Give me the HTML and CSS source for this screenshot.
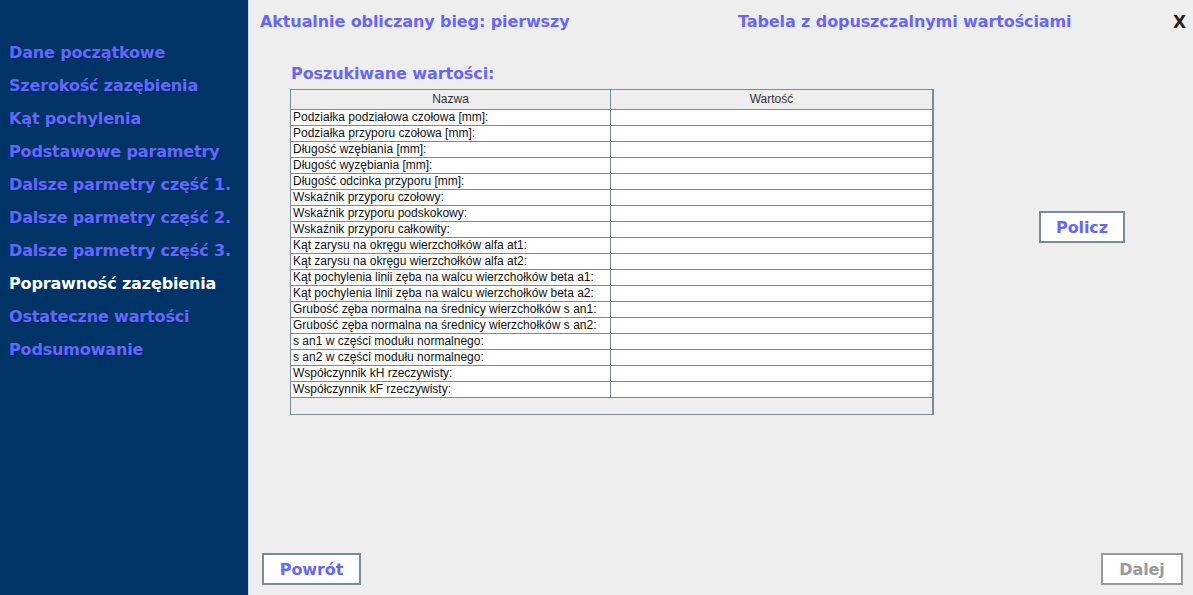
FILE: index.html
```html
<!DOCTYPE html>
<html lang="pl">
<head>
<meta charset="utf-8">
<title>Poprawność zazębienia</title>
<link rel="stylesheet" href="styles.css">
</head>
<body>
<div class="app">
  <nav class="sidebar">
    <div class="nav-item">Dane początkowe</div>
    <div class="nav-item">Szerokość zazębienia</div>
    <div class="nav-item">Kąt pochylenia</div>
    <div class="nav-item">Podstawowe parametry</div>
    <div class="nav-item">Dalsze parmetry część 1.</div>
    <div class="nav-item">Dalsze parmetry część 2.</div>
    <div class="nav-item">Dalsze parmetry część 3.</div>
    <div class="nav-item active">Poprawność zazębienia</div>
    <div class="nav-item">Ostateczne wartości</div>
    <div class="nav-item">Podsumowanie</div>
  </nav>
  <main class="main">
    <header class="header">
      <div class="title">Aktualnie obliczany bieg: pierwszy</div>
      <div class="title">Tabela z dopuszczalnymi wartościami</div>
      <div class="close">X</div>
    </header>
    <section class="content">
      <div class="table-block">
        <div class="section-title">Poszukiwane wartości:</div>
        <div class="grid">
          <div class="row head"><div class="cell">Nazwa</div><div class="cell">Wartość</div></div>
          <div class="row"><div class="cell">Podziałka podziałowa czołowa [mm]:</div><div class="cell"></div></div>
          <div class="row"><div class="cell">Podziałka przyporu czołowa [mm]:</div><div class="cell"></div></div>
          <div class="row"><div class="cell">Długość wzębiania [mm]:</div><div class="cell"></div></div>
          <div class="row"><div class="cell">Długość wyzębiania [mm]:</div><div class="cell"></div></div>
          <div class="row"><div class="cell">Długość odcinka przyporu [mm]:</div><div class="cell"></div></div>
          <div class="row"><div class="cell">Wskaźnik przyporu czołowy:</div><div class="cell"></div></div>
          <div class="row"><div class="cell">Wskaźnik przyporu podskokowy:</div><div class="cell"></div></div>
          <div class="row"><div class="cell">Wskaźnik przyporu całkowity:</div><div class="cell"></div></div>
          <div class="row"><div class="cell">Kąt zarysu na okręgu wierzchołków alfa at1:</div><div class="cell"></div></div>
          <div class="row"><div class="cell">Kąt zarysu na okręgu wierzchołków alfa at2:</div><div class="cell"></div></div>
          <div class="row"><div class="cell">Kąt pochylenia linii zęba na walcu wierzchołków beta a1:</div><div class="cell"></div></div>
          <div class="row"><div class="cell">Kąt pochylenia linii zęba na walcu wierzchołków beta a2:</div><div class="cell"></div></div>
          <div class="row"><div class="cell">Grubość zęba normalna na średnicy wierzchołków s an1:</div><div class="cell"></div></div>
          <div class="row"><div class="cell">Grubość zęba normalna na średnicy wierzchołków s an2:</div><div class="cell"></div></div>
          <div class="row"><div class="cell">s an1 w części modułu normalnego:</div><div class="cell"></div></div>
          <div class="row"><div class="cell">s an2 w części modułu normalnego:</div><div class="cell"></div></div>
          <div class="row"><div class="cell">Współczynnik kH rzeczywisty:</div><div class="cell"></div></div>
          <div class="row"><div class="cell">Współczynnik kF rzeczywisty:</div><div class="cell"></div></div>
          <div class="filler"></div>
        </div>
      </div>
      <div class="side-actions">
        <button class="btn">Policz</button>
      </div>
    </section>
    <footer class="footer">
      <button class="btn">Powrót</button>
      <button class="btn disabled">Dalej</button>
    </footer>
  </main>
</div>
</body>
</html>
```

FILE: styles.css
```css
* { box-sizing: border-box; }
html, body { margin: 0; padding: 0; }
body {
  width: 1193px;
  height: 595px;
  overflow: hidden;
  background: #eeeeee;
  font-family: "DejaVu Sans", Verdana, sans-serif;
}
.app {
  display: flex;
  height: 595px;
}
.sidebar {
  width: 248px;
  flex: none;
  background: #003366;
  padding-top: 41px;
  padding-left: 9px;
  display: flex;
  flex-direction: column;
}
.nav-item {
  height: 33px;
  line-height: 24px;
  color: #6666ff;
  font-weight: bold;
  font-size: 16px;
  letter-spacing: -0.15px;
  white-space: nowrap;
}
.nav-item.active { color: #ffffff; }
.main {
  flex: 1;
  display: flex;
  flex-direction: column;
  border-left: 1px solid #d4d9e6;
}
.header {
  height: 43px;
  display: grid;
  grid-template-columns: 478px 1fr auto;
  align-items: center;
  padding: 0 7px 0 11px;
  background: #eeeeee;
}
.title {
  color: #6666ff;
  font-weight: bold;
  font-size: 16px;
  letter-spacing: -0.1px;
  white-space: nowrap;
}
.close {
  color: #222222;
  font-weight: bold;
  font-size: 17px;
}
.content {
  flex: 1;
  display: flex;
  padding-left: 41px;
}
.table-block {
  width: 644px;
  display: flex;
  flex-direction: column;
}
.section-title {
  color: #6666ff;
  font-weight: bold;
  font-size: 16px;
  letter-spacing: -0.1px;
  height: 46px;
  line-height: 22px;
  padding-top: 20px;
  padding-left: 1px;
  white-space: nowrap;
}
.grid {
  border: 1px solid #7a8a99;
  border-right-width: 2px;
  background: #eeeeee;
  font-family: "Liberation Sans", Arial, sans-serif;
  font-size: 12px;
  color: #111111;
}
.row {
  display: grid;
  grid-template-columns: 320px 1fr;
  height: 16px;
  background: #ffffff;
  border-bottom: 1px solid #7a8a99;
}
.cell {
  padding-left: 2px;
  line-height: 15px;
  white-space: nowrap;
  overflow: hidden;
}
.cell:first-child { border-right: 1px solid #7a8a99; }
.row.head {
  height: 20px;
  background: #eeeeee;
}
.row.head .cell {
  text-align: center;
  line-height: 19px;
  color: #333333;
  padding-left: 0;
}
.filler { height: 16px; }
.side-actions {
  flex: 1;
  display: flex;
  justify-content: flex-end;
  align-items: flex-start;
  padding-top: 168px;
  padding-right: 68px;
}
.btn {
  background: #ffffff;
  border: 2px solid #7a8a99;
  color: #6666ff;
  font-family: "DejaVu Sans", Verdana, sans-serif;
  font-weight: bold;
  font-size: 16px;
  letter-spacing: -0.1px;
  height: 32px;
  padding: 0;
}
.side-actions .btn { width: 86px; }
.footer {
  height: 52px;
  display: flex;
  justify-content: space-between;
  align-items: flex-start;
  padding: 10px 10px 0 13px;
}
.footer .btn { width: 99px; }
.footer .btn.disabled {
  width: 82px;
  color: #999999;
  border-color: #999999;
}
```
